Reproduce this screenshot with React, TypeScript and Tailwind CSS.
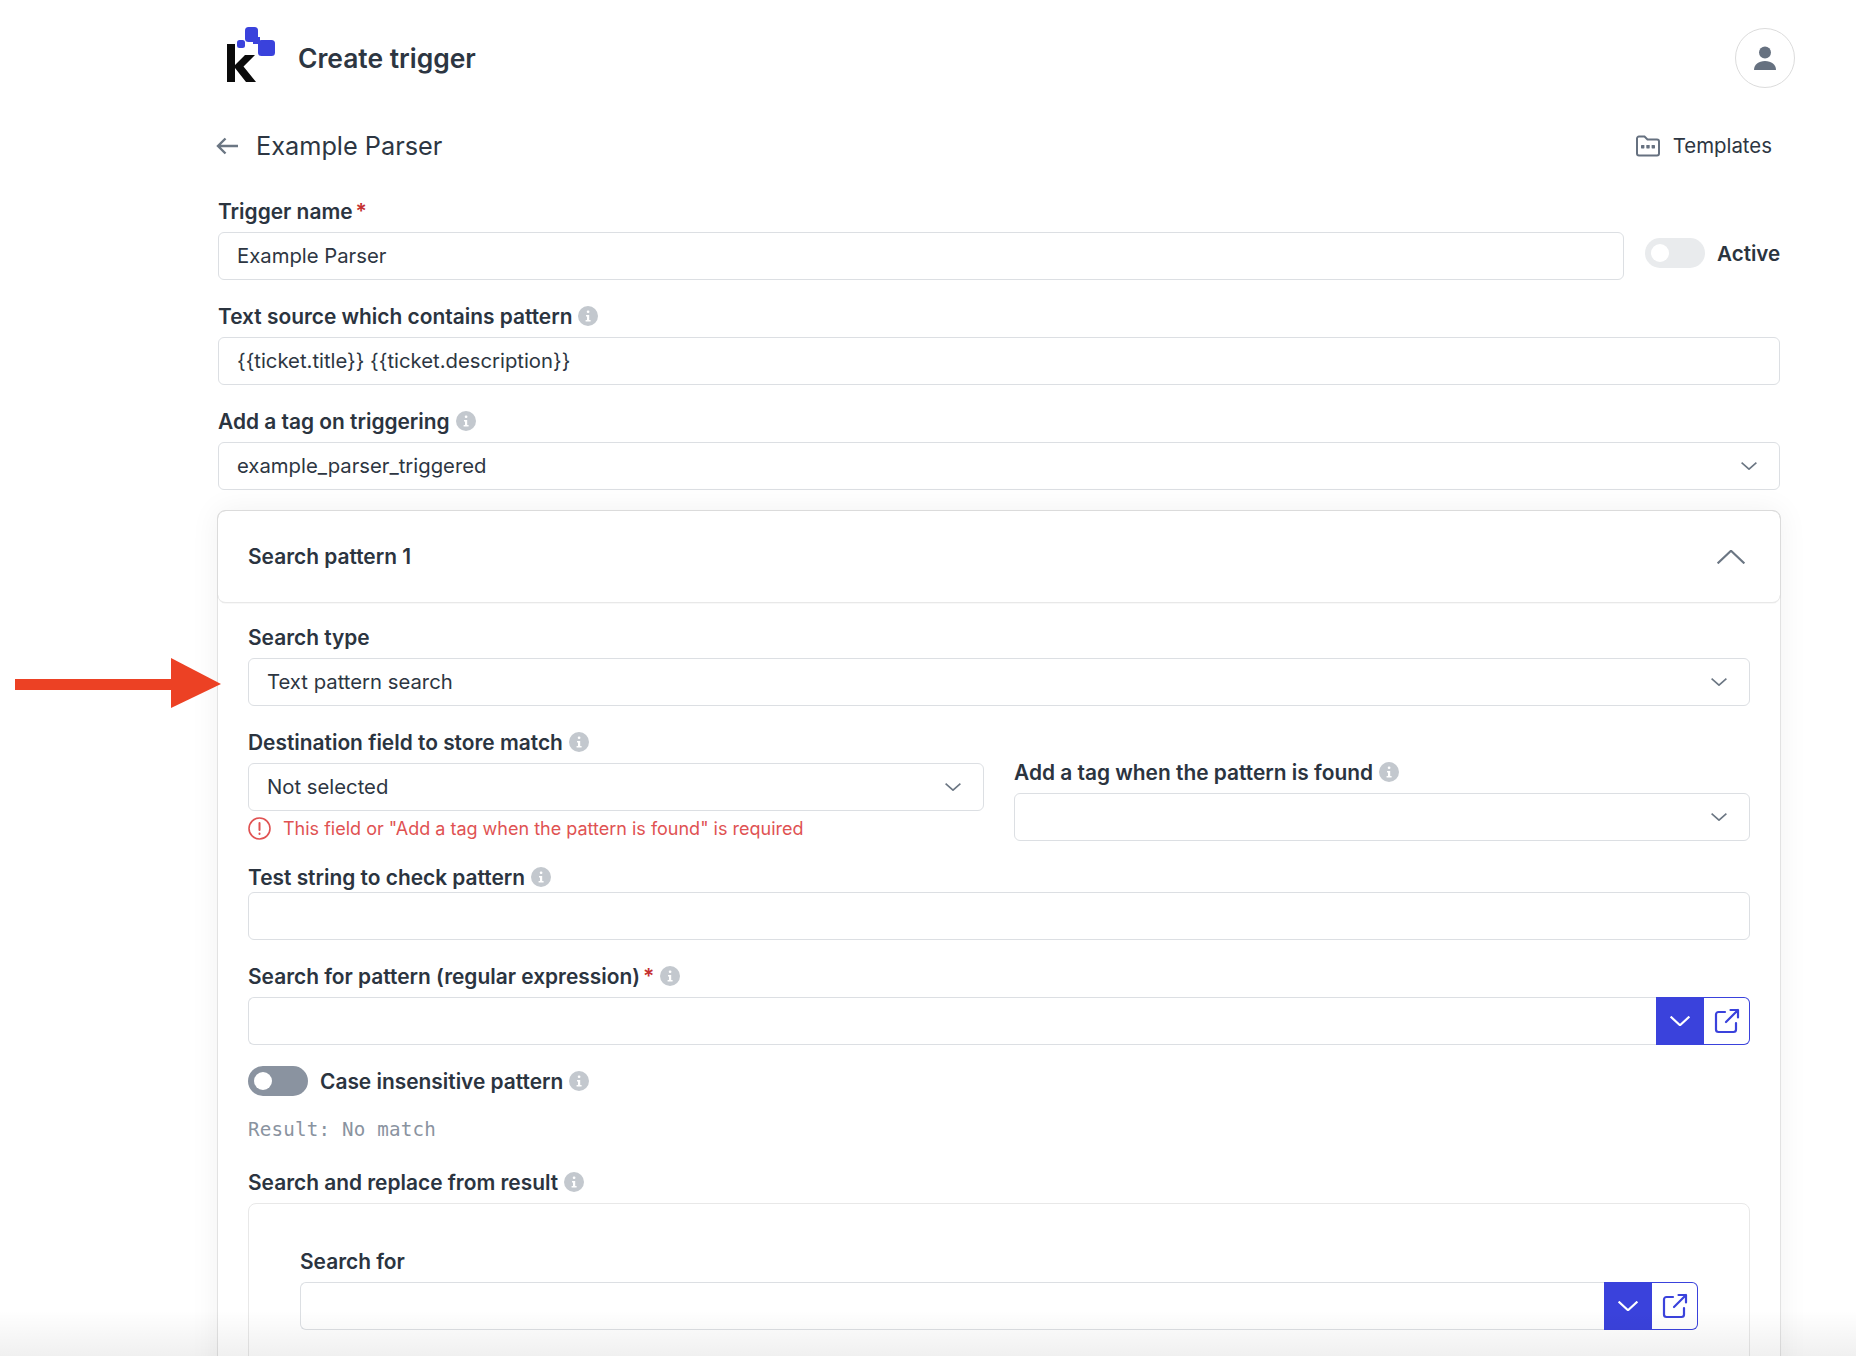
import React from "react";

const font = { fontFamily: "Inter, 'Liberation Sans', sans-serif" };

function Info() {
  return (
    <svg width="20" height="20" viewBox="0 0 20 20" className="shrink-0">
      <circle cx="10" cy="10" r="10" fill="#c3c8ce" />
      <rect x="8.8" y="4.4" width="2.6" height="2.6" rx="1" fill="#fff" />
      <path d="M8 9h3.2v5H12.6v1.4H7.6V14h1.4v-3.6H8z" fill="#fff" />
    </svg>
  );
}

function Chevron({ up = false, w = 16, color = "#6b7683", sw = 1.6 }: { up?: boolean; w?: number; color?: string; sw?: number }) {
  const h = w * 0.5;
  return (
    <svg width={w} height={h} viewBox={`0 0 ${w} ${h}`} fill="none" stroke={color} strokeWidth={sw}>
      {up ? (
        <path d={`M0.6 ${h - 0.6} L${w / 2} 0.8 L${w - 0.6} ${h - 0.6}`} />
      ) : (
        <path d={`M0.6 0.6 L${w / 2} ${h - 0.8} L${w - 0.6} 0.6`} />
      )}
    </svg>
  );
}

function Label({ text, info = false, req = false, className = "mb-[7px]" }: { text: string; info?: boolean; req?: boolean; className?: string }) {
  return (
    <div className={`flex h-7 items-center gap-[6px] text-[20.9px] font-semibold leading-7 text-[#2b343f] ${className}`}>
      <span className="pt-[1px]">
        {text}
        {req && <span className="ml-[3px] text-[21px] leading-none text-[#c53030]">*</span>}
      </span>
      {info && <Info />}
    </div>
  );
}

function Field({ value = "", select = false, className = "" }: { value?: string; select?: boolean; className?: string }) {
  return (
    <div className={`flex h-12 items-center justify-between rounded-[6px] border border-[#dcdfe3] bg-white pl-[18px] pr-[22px] text-[20.3px] text-[#2d3642] ${className}`}>
      <span className="pt-[1px]">{value}</span>
      {select && <Chevron />}
    </div>
  );
}

function External() {
  return (
    <svg width="26" height="26" viewBox="0 0 26 26" fill="none" stroke="#3a42dc" strokeWidth="2.2" strokeLinecap="round" strokeLinejoin="round">
      <path d="M11 4H4.5A2.5 2.5 0 0 0 2 6.5v15A2.5 2.5 0 0 0 4.5 24h15a2.5 2.5 0 0 0 2.5-2.5V15" />
      <path d="M12 14L24 2M16.5 2H24v7.5" />
    </svg>
  );
}

function PatternInput() {
  return (
    <div className="flex h-12">
      <div className="flex-1 rounded-l-[6px] border border-r-0 border-[#dcdfe3] bg-white" />
      <div className="flex w-12 items-center justify-center bg-[#3a42dc]">
        <Chevron w={20} color="#fff" sw={2.2} />
      </div>
      <div className="flex w-[46px] items-center justify-center rounded-r-[6px] border border-l-0 border-[#3a42dc] bg-white">
        <External />
      </div>
    </div>
  );
}

function Toggle({ dark = false }: { dark?: boolean }) {
  return (
    <div className={`flex h-[30px] w-[60px] shrink-0 items-center rounded-full pl-[6px] ${dark ? "bg-[#8a93a0]" : "bg-[#e9ebed]"}`}>
      <div className="h-[18px] w-[18px] rounded-full bg-white" />
    </div>
  );
}

export default function App() {
  return (
    <div className="relative h-[1356px] w-full overflow-hidden bg-white" style={font}>
      <div className="pl-[218px] pr-[76px]">
        <header className="flex h-[117px] items-center justify-between">
          <div className="flex items-center gap-[22px] pl-[8px]">
            <svg width="50" height="58" viewBox="0 0 50 58" className="mt-[-6px]">
              <g fill="#3a42dc">
                <rect x="19" y="0" width="13" height="15" rx="3.5" />
                <rect x="11" y="13" width="8" height="8" rx="2.5" />
                <rect x="32" y="13" width="17" height="16" rx="3.5" />
                <path d="M27 10h7v7h-7z" />
              </g>
              <path d="M1 17h8v21L19 28h10L17.5 39.5 30 55H20L9 41V55H1z" fill="#0b0b0b" />
            </svg>
            <h1 className="text-[26.4px] font-semibold text-[#2d3642]">Create trigger</h1>
          </div>
          <div className="mr-[-15px] mt-[-1px] flex h-[60px] w-[60px] items-center justify-center rounded-full border border-[#dcdcdc]">
            <svg width="22" height="24" viewBox="0 0 22 24" fill="#667180">
              <circle cx="11" cy="6.5" r="6" />
              <path d="M0 24c0-5.5 4.5-9 11-9s11 3.5 11 9z" />
            </svg>
          </div>
        </header>

        <div className="flex h-[58px] items-center justify-between">
          <div className="flex items-center">
            <svg width="22" height="18" viewBox="0 0 22 18" fill="none" stroke="#6b7683" strokeWidth="2.4" className="mr-[18px] ml-[-2px]">
              <path d="M22 9H2M9.5 1.5L2 9l7.5 7.5" />
            </svg>
            <span className="text-[25.3px] text-[#2d3642]">Example Parser</span>
          </div>
          <div className="flex items-center gap-[13px] pr-[8px] text-[20.4px] text-[#2d3642]">
            <svg width="24" height="22" viewBox="0 0 24 22" fill="none" stroke="#667180" strokeWidth="2">
              <path d="M1 3.5A2 2 0 0 1 3 1.5h5.5l3 3H21a2 2 0 0 1 2 2V18.5a2 2 0 0 1-2 2H3a2 2 0 0 1-2-2z" />
              <g fill="#667180" stroke="none">
                <rect x="5" y="10" width="3.4" height="3.4" rx=".6" />
                <rect x="10.3" y="10" width="3.4" height="3.4" rx=".6" />
                <rect x="15.6" y="10" width="3.4" height="3.4" rx=".6" />
              </g>
            </svg>
            Templates
          </div>
        </div>

        <div className="mt-[22px]">
          <Label text="Trigger name" req />
          <div className="flex items-center">
            <Field value="Example Parser" className="flex-1" />
            <div className="ml-[21px] mt-[-6px] flex items-center gap-[12px]">
              <Toggle />
              <span className="w-[63px] pt-[3px] text-[20.6px] font-semibold text-[#2b343f]">Active</span>
            </div>
          </div>
        </div>

        <div className="mt-[22px]">
          <Label text="Text source which contains pattern" info />
          <Field value="{{ticket.title}} {{ticket.description}}" />
        </div>

        <div className="mt-[22px]">
          <Label text="Add a tag on triggering" info />
          <Field value="example_parser_triggered" select />
        </div>

        <section className="mx-[-1px] mt-[20px] h-[1000px] rounded-[8px] border border-[#e2e2e2] shadow-[0_0_30px_rgba(0,0,0,0.06)]">
          <div className="flex h-[92px] items-center justify-between rounded-[8px] border-b border-[#e8e8e8] pl-[30px] pr-[35px] shadow-[0_0_1px_rgba(0,0,0,0.3)]">
            <span className="pt-[1px] text-[20.9px] font-semibold text-[#2b343f]">Search pattern 1</span>
            <Chevron up w={28} sw={2.2} />
          </div>

          <div className="px-[30px] pt-[20px]">
            <Label text="Search type" />
            <Field value="Text pattern search" select />

            <div className="mt-[22px] grid grid-cols-2 items-end gap-x-[30px]">
              <div>
                <Label text="Destination field to store match" info />
                <Field value="Not selected" select />
                <div className="mt-[6px] mb-[1px] flex h-[23px] items-center gap-[12px] text-[18px] text-[#e05252]">
                  <svg width="23" height="23" viewBox="0 0 23 23" fill="none" stroke="#e05252" strokeWidth="1.6" strokeLinecap="round">
                    <circle cx="11.5" cy="11.5" r="10.5" />
                    <path d="M11.5 6v7M11.5 16.6v.4" strokeWidth="2" />
                  </svg>
                  This field or "Add a tag when the pattern is found" is required
                </div>
              </div>
              <div>
                <Label text="Add a tag when the pattern is found" info />
                <Field select />
              </div>
            </div>

            <div className="mt-[22px]">
              <Label text="Test string to check pattern" info className="mb-[1px]" />
              <Field />
            </div>

            <div className="mt-[22px]">
              <Label text="Search for pattern (regular expression)" info req />
              <PatternInput />
            </div>

            <div className="mt-[21px] flex items-center gap-3">
              <Toggle dark />
              <Label text="Case insensitive pattern" info className="" />
            </div>

            <div className="mt-[21px] h-[26px] text-[19.2px] leading-[26px] tracking-[0.2px] text-[#8a93a0]" style={{ fontFamily: "'DejaVu Sans Mono', monospace" }}>
              Result: No match
            </div>

            <div className="mt-[25px]">
              <Label text="Search and replace from result" info />
              <div className="h-[400px] rounded-[8px] border border-[#e8e8e8] px-[51px] pt-[43px]">
                <Label text="Search for" />
                <PatternInput />
              </div>
            </div>
          </div>
        </section>
      </div>

      <svg width="210" height="52" viewBox="0 0 210 52" className="absolute left-[15px] top-[658px]" fill="#ec4124">
        <rect x="0" y="21" width="158" height="11" />
        <path d="M156 0L206 26L156 50z" />
      </svg>

      <div className="pointer-events-none absolute inset-x-0 bottom-0 h-[46px] bg-gradient-to-b from-transparent to-[rgba(0,0,0,0.06)]" />
    </div>
  );
}
